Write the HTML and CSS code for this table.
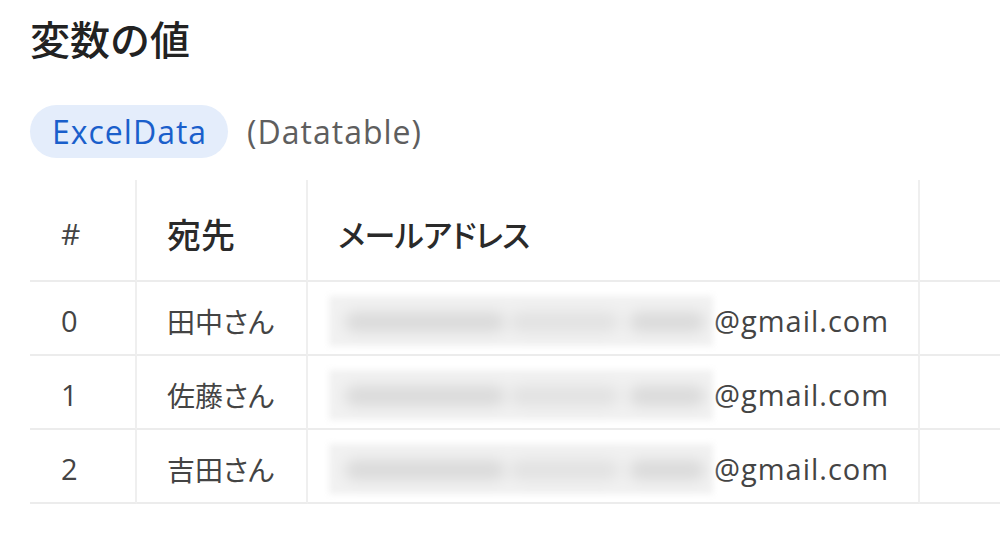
FILE: index.html
```html
<!DOCTYPE html>
<html lang="ja">
<head>
<meta charset="utf-8">
<link rel="stylesheet" href="styles.css">
</head>
<body>
<main class="panel">
  <h1 class="title">変数の値</h1>
  <div class="var-line">
    <span class="pill">ExcelData</span>
    <span class="type">(Datatable)</span>
  </div>
  <div class="table">
    <div class="cell head c1">#</div>
    <div class="cell head c2">宛先</div>
    <div class="cell head c3">メールアドレス</div>
    <div class="cell head c4"></div>

    <div class="cell c1">0</div>
    <div class="cell c2">田中さん</div>
    <div class="cell c3"><span class="masked"><span class="bar b1"></span><span class="bar b2"></span><span class="bar b3"></span></span>@gmail.com</div>
    <div class="cell c4"></div>

    <div class="cell c1">1</div>
    <div class="cell c2">佐藤さん</div>
    <div class="cell c3"><span class="masked"><span class="bar b1"></span><span class="bar b2"></span><span class="bar b3"></span></span>@gmail.com</div>
    <div class="cell c4"></div>

    <div class="cell c1">2</div>
    <div class="cell c2">吉田さん</div>
    <div class="cell c3"><span class="masked"><span class="bar b1"></span><span class="bar b2"></span><span class="bar b3"></span></span>@gmail.com</div>
    <div class="cell c4"></div>
  </div>
</main>
</body>
</html>
```
FILE: styles.css
```css
html, body {
  margin: 0;
  padding: 0;
  background: #ffffff;
}
body {
  font-family: "Open Sans", "Noto Sans CJK JP", sans-serif;
  color: #333;
  overflow: hidden;
}
.panel {
  padding: 15px 0 0 30px;
}
.title {
  margin: 0;
  font-family: "Noto Sans CJK JP", sans-serif;
  font-size: 40px;
  line-height: 46px;
  font-weight: 500;
  color: #222;
}
.var-line {
  display: flex;
  align-items: center;
  gap: 19px;
  margin-top: 44px;
  height: 53px;
}
.pill {
  display: inline-flex;
  align-items: center;
  height: 53px;
  padding: 0 21px 0 22px;
  border-radius: 27px;
  background: #e4edfb;
  color: #1a5fcb;
  font-size: 32px;
  letter-spacing: 1px;
}
.type {
  color: #5e5e5e;
  font-size: 32px;
  letter-spacing: 1px;
}
.table {
  display: grid;
  grid-template-columns: 107px 171px 612px 1fr;
  grid-template-rows: 102px repeat(3, 74px);
  margin-top: 22px;
}
.cell {
  display: flex;
  align-items: center;
  padding-left: 30px;
  padding-top: 5px;
  border-bottom: 2px solid #ececec;
  border-right: 2px solid #efefef;
  font-size: 29px;
  letter-spacing: 1px;
  color: #444;
  white-space: nowrap;
}
.cell.c1 {
  padding-left: 31px;
  font-size: 29px;
  letter-spacing: 0;
}
.cell.c4 {
  border-right: none;
}
.cell.c2 {
  font-family: "Noto Sans CJK JP", sans-serif;
  font-size: 28px;
  letter-spacing: 0;
  font-feature-settings: "palt";
}
.cell.head {
  font-family: "Noto Sans CJK JP", sans-serif;
  font-size: 34px;
  font-weight: 500;
  letter-spacing: 0;
  color: #2a2a2a;
  padding-top: 6px;
}
.cell.head.c1 {
  font-family: "Open Sans", sans-serif;
  font-size: 30px;
  font-weight: 400;
  color: #444;
}
.cell.head.c2 {
  font-feature-settings: normal;
}
.cell.c3 {
  padding-left: 21px;
}
.cell.head.c3 {
  padding-left: 30px;
  font-size: 31px;
  font-feature-settings: "palt";
  letter-spacing: -0.5px;
}
.masked {
  position: relative;
  display: inline-block;
  width: 384px;
  height: 50px;
  margin-right: 1px;
  background: #f1f1f1;
  filter: blur(3px);
}
.bar {
  position: absolute;
  top: 16px;
  height: 20px;
  background: #dadada;
  filter: blur(6px);
  border-radius: 10px;
}
.b1 { left: 16px; width: 160px; }
.b2 { left: 180px; width: 110px; background: #e2e2e2; }
.b3 { left: 300px; width: 76px; }
```
